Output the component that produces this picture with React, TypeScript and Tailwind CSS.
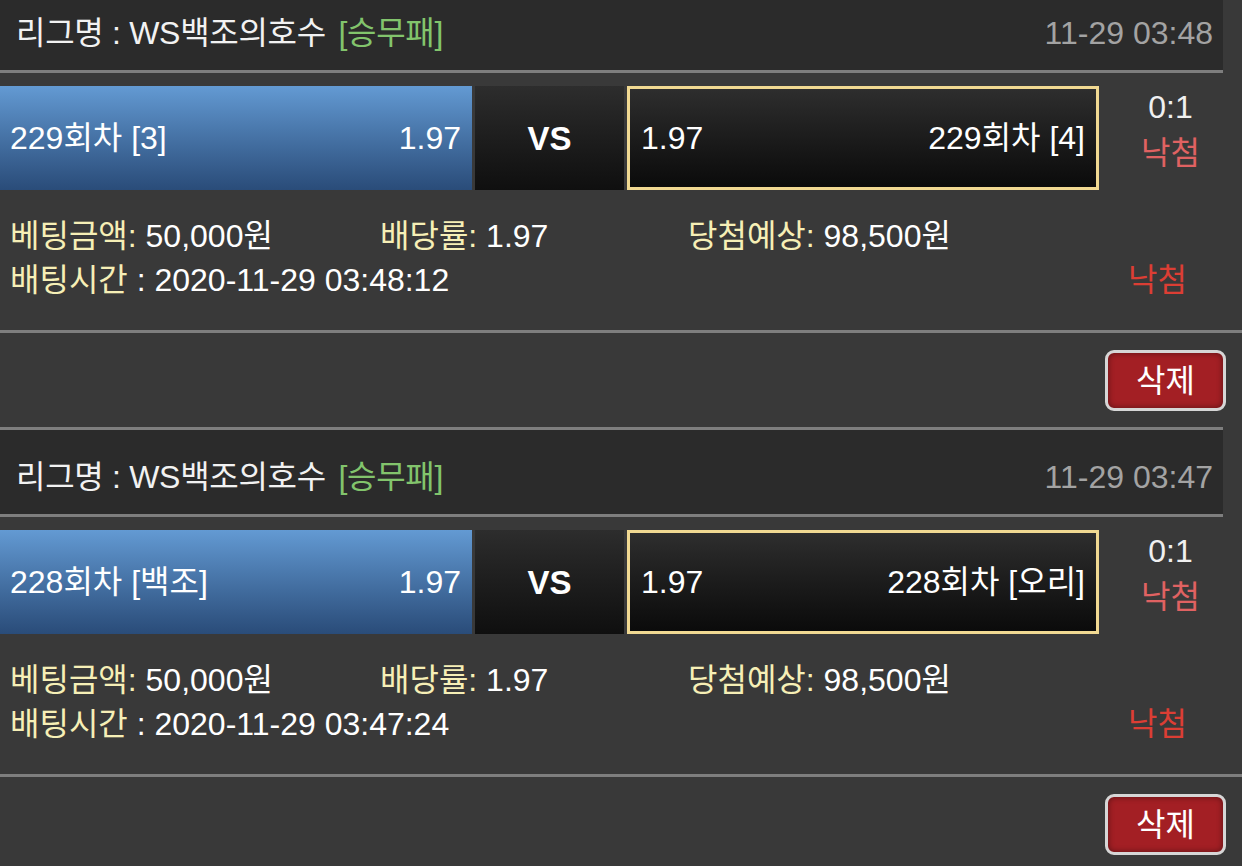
import React from 'react';

type Bet = {
  time: string;
  home: string;
  away: string;
  odds: string;
  betAt: string;
};

const bets: Bet[] = [
  { time: '11-29 03:48', home: '229회차 [3]', away: '229회차 [4]', odds: '1.97', betAt: '2020-11-29 03:48:12' },
  { time: '11-29 03:47', home: '228회차 [백조]', away: '228회차 [오리]', odds: '1.97', betAt: '2020-11-29 03:47:24' },
];

function BetCard({ bet }: { bet: Bet }) {
  return (
    <div>
      {/* league header */}
      <div className="w-[1223px] h-[90px] bg-[#2b2b2b] border-y-[3px] border-[#7e7e7e] flex items-center justify-between pl-[16px] pr-[10px] pt-[9px]">
        <div className="text-[#f2f2f2] tracking-[-0.3px]">
          리그명 : WS백조의호수 <span className="ml-[4px] text-[#82c46c]">[승무패]</span>
        </div>
        <div className="text-[#a3a3a3]">{bet.time}</div>
      </div>

      {/* match body */}
      <div className="pt-[13px] pb-[28px] border-b-[3px] border-[#7e7e7e]">
        <div className="flex h-[104px]">
          <div className="w-[472px] flex items-center justify-between pl-[10px] pr-[11px] bg-gradient-to-b from-[#639ad3] to-[#2a4c79] text-white">
            <span>{bet.home}</span>
            <span>{bet.odds}</span>
          </div>
          <div className="ml-[3px] w-[149px] flex items-center justify-center bg-gradient-to-b from-[#2d2d2d] to-[#0f0f0f] text-white font-bold text-[33px]">
            VS
          </div>
          <div className="ml-[3px] w-[472px] flex items-center justify-between pl-[11px] pr-[11px] border-[3px] border-[#f1d992] bg-gradient-to-b from-[#2e2e2e] to-[#0b0b0b] text-white">
            <span>{bet.odds}</span>
            <span>{bet.away}</span>
          </div>
          <div className="flex-1 flex flex-col items-center leading-[46px] -mt-[2px]">
            <span className="text-[#f0f0f0]">0:1</span>
            <span className="text-[#e06262]">낙첨</span>
          </div>
        </div>

        <div className="mt-[24px] pl-[10px] pr-[55px] leading-[44px]">
          <div className="flex">
            <div className="w-[370px]">
              <span className="text-[#f6efb6]">베팅금액:</span> <span className="text-white">50,000원</span>
            </div>
            <div className="w-[308px]">
              <span className="text-[#f6efb6]">배당률:</span> <span className="text-white">{bet.odds}</span>
            </div>
            <div>
              <span className="text-[#f6efb6]">당첨예상:</span> <span className="text-white">98,500원</span>
            </div>
          </div>
          <div className="flex justify-between">
            <div>
              <span className="text-[#f6efb6]">배팅시간</span> <span className="text-white">: {bet.betAt}</span>
            </div>
            <span className="text-[#dc3e34]">낙첨</span>
          </div>
        </div>
      </div>

      {/* actions */}
      <div className="h-[94px] flex justify-end items-start pt-[17px] pr-[16px]">
        <button className="w-[121px] h-[61px] rounded-[9px] border-[3px] border-[#d6d6d6] bg-[#a31f24] shadow-[inset_0_0_6px_rgba(0,0,0,0.45)] text-white">
          삭제
        </button>
      </div>
    </div>
  );
}

export default function App() {
  return (
    <div
      className="w-[1242px] h-[866px] overflow-hidden bg-[#393939] text-[32px] leading-none"
      style={{ fontFamily: '"Liberation Sans", "Noto Sans CJK KR", sans-serif' }}
    >
      <div className="-mt-[17px]">
        {bets.map((b) => (
          <BetCard key={b.betAt} bet={b} />
        ))}
      </div>
    </div>
  );
}
